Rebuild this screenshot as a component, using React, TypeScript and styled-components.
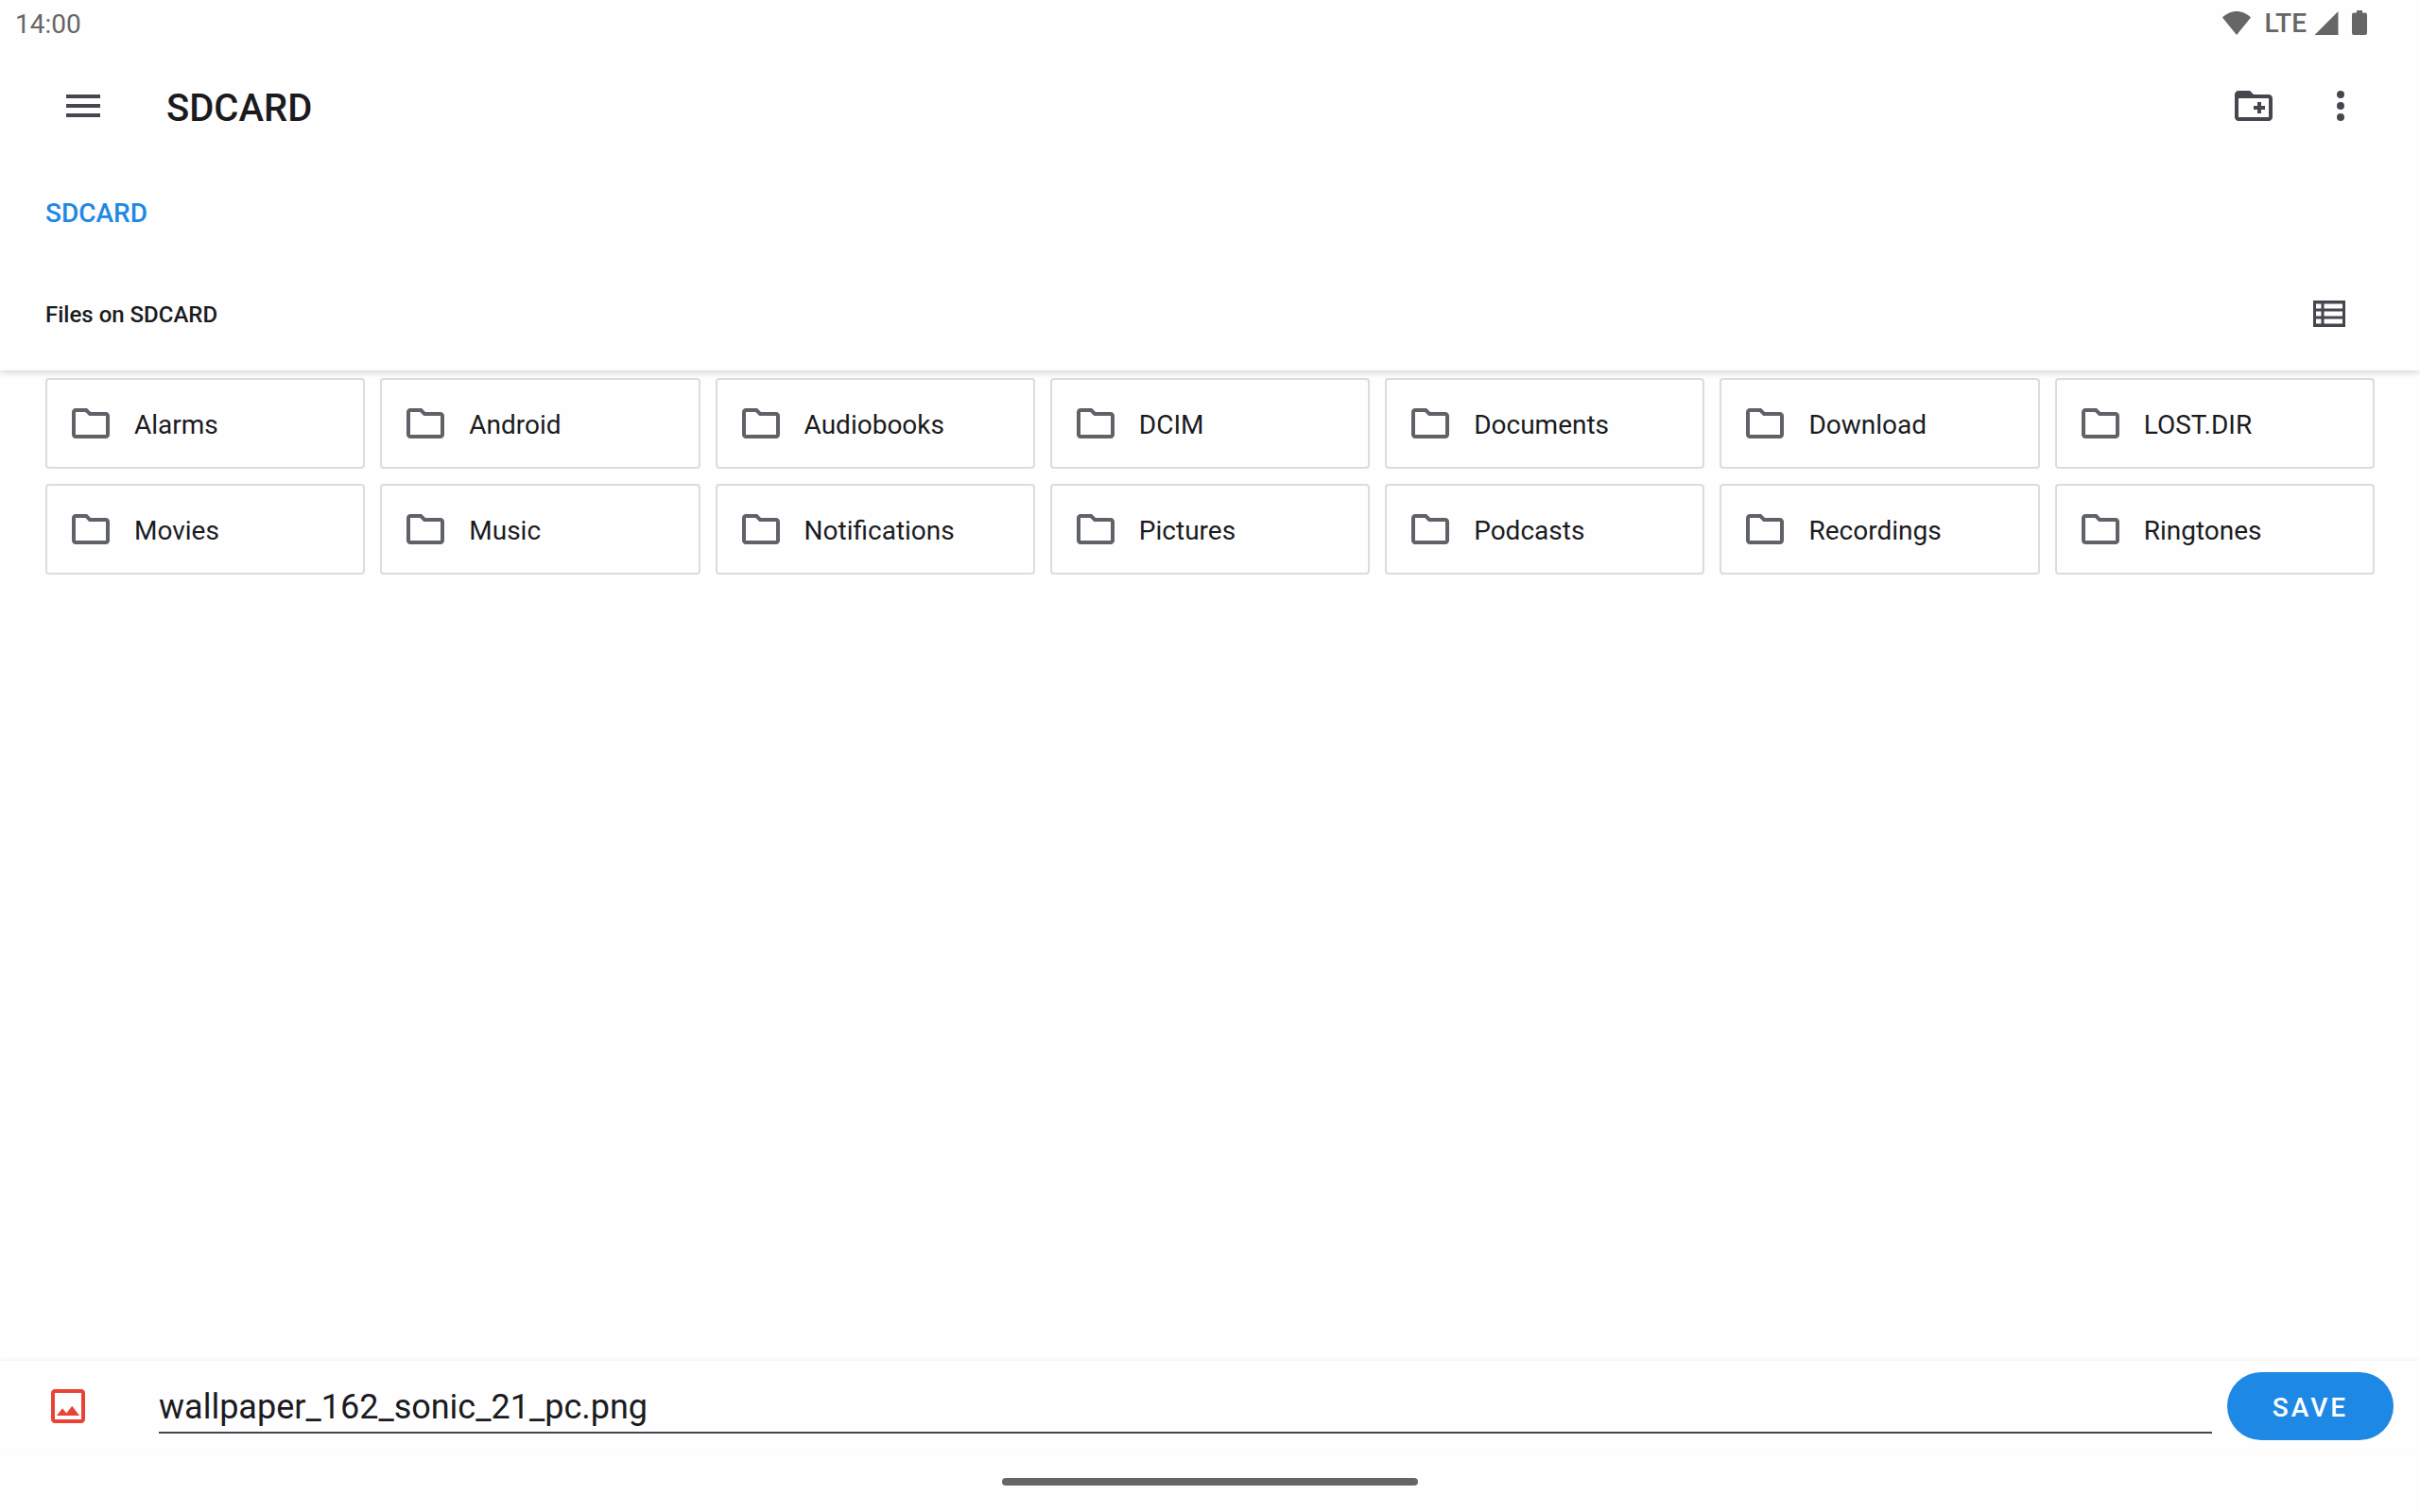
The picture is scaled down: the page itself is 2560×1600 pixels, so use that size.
import React, { useState } from "react";
import styled, { createGlobalStyle } from "styled-components";

const color = {
  surface: "#fefefe",
  text: "#1b1b1f",
  icon: "#46464f",
  folder: "#5f6368",
  outline: "#dadcdd",
  accent: "#1e88e5",
  status: "#666666",
  image: "#ea4335",
};

const GlobalStyle = createGlobalStyle`
  *, *::before, *::after { box-sizing: border-box; }
  body { margin: 0; background: ${color.surface}; }
  button, input { font: inherit; color: inherit; }
`;

const Screen = styled.div`
  display: flex;
  flex-direction: column;
  min-height: 100vh;
  background: ${color.surface};
  color: ${color.text};
  font-family: Roboto, "Liberation Sans", sans-serif;
  font-size: 28px;
  line-height: 36px;
`;

const StatusBar = styled.div`
  display: flex;
  align-items: center;
  justify-content: space-between;
  height: 48px;
  padding: 0 56px 0 16px;
  color: ${color.status};
`;

const Clock = styled.span`
  padding-top: 4px;
`;

const StatusIcons = styled.div`
  display: flex;
  align-items: center;
  gap: 14px;
  font-weight: 500;
`;

const Network = styled.span`
  display: flex;
  align-items: center;
  gap: 8px;
`;

const NetworkType = styled.span`
  padding-top: 2px;
`;

const Header = styled.header`
  position: relative;
  z-index: 1;
  background: ${color.surface};
  box-shadow: 0 1px 8px rgba(0, 0, 0, 0.22);
`;

const Toolbar = styled.div`
  display: flex;
  align-items: center;
  height: 128px;
  padding: 0 38px 0 40px;
`;

const IconButton = styled.button<{ $width?: number }>`
  display: flex;
  align-items: center;
  justify-content: center;
  width: ${(p) => p.$width ?? 96}px;
  height: 96px;
  padding: 0;
  border: 0;
  border-radius: 50%;
  background: none;
  color: ${color.icon};
  cursor: pointer;
`;

const Title = styled.h1`
  flex: 1;
  margin: 0;
  padding: 6px 0 0 40px;
  font-size: 40px;
  line-height: 48px;
  font-weight: 500;
`;

const Actions = styled.div`
  display: flex;
`;

const Breadcrumb = styled.nav`
  display: flex;
  align-items: center;
  height: 96px;
  padding: 4px 48px 0;
`;

const Crumb = styled.a`
  color: ${color.accent};
  font-weight: 500;
  text-decoration: none;
`;

const SectionBar = styled.div`
  display: flex;
  align-items: center;
  justify-content: space-between;
  height: 120px;
  padding: 0 48px;
`;

const SectionTitle = styled.h2`
  margin: 0;
  padding-top: 2px;
  font-size: 24px;
  line-height: 32px;
  font-weight: 500;
`;

const Files = styled.main`
  flex: 1;
  padding: 8px 48px;
`;

const Grid = styled.ul`
  display: grid;
  grid-template-columns: repeat(auto-fill, minmax(320px, 1fr));
  gap: 16px;
  margin: 0;
  padding: 0;
  list-style: none;
`;

const Folder = styled.button`
  display: flex;
  align-items: center;
  gap: 22px;
  width: 100%;
  height: 96px;
  padding: 0 22px;
  border: 2px solid ${color.outline};
  border-radius: 4px;
  background: ${color.surface};
  text-align: left;
  cursor: pointer;

  svg { color: ${color.folder}; flex: none; }
`;

const FolderName = styled.span`
  padding-top: 4px;
`;

const SaveBar = styled.form`
  display: flex;
  align-items: center;
  height: 96px;
  padding: 0 28px 0 48px;
  background: ${color.surface};
  box-shadow: 0 -1px 4px rgba(0, 0, 0, 0.06);

  > svg { color: ${color.image}; flex: none; }
`;

const NameField = styled.input`
  flex: 1;
  min-width: 0;
  height: 58px;
  margin: 0 16px 0 72px;
  padding: 4px 0 0;
  border: 0;
  border-bottom: 2px solid ${color.icon};
  background: none;
  font-size: 36px;
  line-height: 44px;
  outline: none;
`;

const SaveButton = styled.button`
  width: 176px;
  height: 72px;
  padding: 4px 0 0;
  border: 0;
  border-radius: 36px;
  background: ${color.accent};
  color: #ffffff;
  font-weight: 500;
  letter-spacing: 3px;
  cursor: pointer;
`;

const GestureArea = styled.div`
  display: flex;
  justify-content: center;
  padding: 28px 0;
`;

const Handle = styled.div`
  width: 440px;
  height: 8px;
  border-radius: 4px;
  background: ${color.status};
`;

function Icon({ d, size = 48 }: { d: string; size?: number }) {
  return (
    <svg width={size} height={size} viewBox="0 0 24 24" fill="currentColor" aria-hidden="true">
      <path fillRule="evenodd" d={d} />
    </svg>
  );
}

const paths = {
  menu: "M3 18h18v-2H3v2zm0-5h18v-2H3v2zm0-7v2h18V6H3z",
  newFolder:
    "M20 6h-8l-2-2H4c-1.11 0-1.99.89-1.99 2L2 18c0 1.11.89 2 2 2h16c1.11 0 2-.89 2-2V8c0-1.11-.89-2-2-2zm0 12H4V8h16v10zM14 16h2v-2h2v-2h-2v-2h-2v2h-2v2h2z",
  more: "M12 8a2 2 0 1 0 0-4 2 2 0 0 0 0 4zm0 2a2 2 0 1 0 0 4 2 2 0 0 0 0-4zm0 6a2 2 0 1 0 0 4 2 2 0 0 0 0-4z",
  folder:
    "M9.17 6l2 2H20v10H4V6h5.17M10 4H4c-1.1 0-1.99.9-1.99 2L2 18c0 1.1.9 2 2 2h16c1.1 0 2-.9 2-2V8c0-1.1-.9-2-2-2h-8l-2-2z",
  image:
    "M19 5v14H5V5h14m0-2H5c-1.1 0-2 .9-2 2v14c0 1.1.9 2 2 2h14c1.1 0 2-.9 2-2V5c0-1.1-.9-2-2-2zm-4.860 8.860l-3 3.870L9 13.140 6 17h12l-3.860-5.140z",
};

function ListIcon() {
  return (
    <svg width="34" height="28" viewBox="0 0 34 28" fill="currentColor" aria-hidden="true">
      <path
        fillRule="evenodd"
        d="M0 0H34V28H0ZM3 3.500V8.500H8.500V3.500ZM11.500 3.500V8.500H31V3.500ZM3 11.500V16.500H8.500V11.500ZM11.500 11.500V16.500H31V11.500ZM3 19.500V24.500H8.500V19.500ZM11.500 19.500V24.500H31V19.500Z"
      />
    </svg>
  );
}

const folders = [
  "Alarms", "Android", "Audiobooks", "DCIM", "Documents", "Download", "LOST.DIR",
  "Movies", "Music", "Notifications", "Pictures", "Podcasts", "Recordings", "Ringtones",
];

export default function App() {
  const [name, setName] = useState("wallpaper_162_sonic_21_pc.png");

  return (
    <Screen>
      <GlobalStyle />
      <Header>
        <StatusBar>
          <Clock>14:00</Clock>
          <StatusIcons>
            <svg width="30" height="25" viewBox="0 0 30 25" fill="currentColor" aria-hidden="true">
              <path d="M15 25L0 6.500C4 2.500 9.500 0 15 0s11 2.500 15 6.500Z" />
            </svg>
            <Network>
              <NetworkType>LTE</NetworkType>
              <svg width="26" height="25" viewBox="0 0 26 25" fill="currentColor" aria-hidden="true">
                <path d="M25.500 0V25H0.500Z" />
              </svg>
            </Network>
            <svg width="16" height="26" viewBox="0 0 16 26" fill="currentColor" aria-hidden="true">
              <path d="M5 0h6v2.500h3a2 2 0 0 1 2 2V24a2 2 0 0 1-2 2H2a2 2 0 0 1-2-2V4.500a2 2 0 0 1 2-2h3Z" />
            </svg>
          </StatusIcons>
        </StatusBar>
        <Toolbar>
          <IconButton type="button" aria-label="Show roots">
            <Icon d={paths.menu} />
          </IconButton>
          <Title>SDCARD</Title>
          <Actions>
            <IconButton type="button" $width={92} aria-label="New folder">
              <Icon d={paths.newFolder} />
            </IconButton>
            <IconButton type="button" $width={92} aria-label="More options">
              <Icon d={paths.more} />
            </IconButton>
          </Actions>
        </Toolbar>
        <Breadcrumb aria-label="Path">
          <Crumb href="#sdcard">SDCARD</Crumb>
        </Breadcrumb>
        <SectionBar>
          <SectionTitle>Files on SDCARD</SectionTitle>
          <IconButton type="button" aria-label="List view">
            <ListIcon />
          </IconButton>
        </SectionBar>
      </Header>
      <Files>
        <Grid>
          {folders.map((folder) => (
            <li key={folder}>
              <Folder type="button">
                <Icon d={paths.folder} />
                <FolderName>{folder}</FolderName>
              </Folder>
            </li>
          ))}
        </Grid>
      </Files>
      <SaveBar onSubmit={(e) => e.preventDefault()}>
        <Icon d={paths.image} />
        <NameField aria-label="File name" value={name} onChange={(e) => setName(e.target.value)} />
        <SaveButton type="submit">SAVE</SaveButton>
      </SaveBar>
      <GestureArea>
        <Handle />
      </GestureArea>
    </Screen>
  );
}
